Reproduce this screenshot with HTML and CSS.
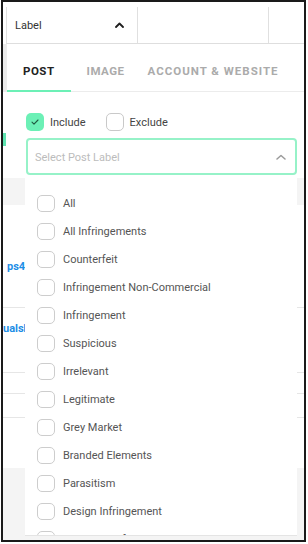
FILE: index.html
```html
<!DOCTYPE html>
<html>
<head>
<meta charset="utf-8">
<link rel="stylesheet" href="styles.css">
</head>
<body>
<div class="frame">
  <div class="thead">
    <div class="th th-label">
      <span>Label</span>
      <svg class="chev-head" width="9" height="6" viewBox="0 0 9 6"><path d="M1 5 L4.5 1.5 L8 5" /></svg>
    </div>
    <div class="th th-mid"></div>
    <div class="th th-last"></div>
  </div>
  <div class="tbody">
    <div class="row r-tabs"></div>
    <div class="row r-filter"><span class="teal"></span></div>
    <div class="row r-band"></div>
    <div class="row r-ps4"><span class="link">ps4</span></div>
    <div class="row r-dual"><span class="link">ualsh</span></div>
    <div class="row r-c"></div>
    <div class="row r-d"></div>
    <div class="row r-e"></div>
    <div class="row r-f"></div>
  </div>

  <div class="popover">
    <div class="tabs">
      <div class="tab active">POST</div>
      <div class="tab">IMAGE</div>
      <div class="tab tab-last">ACCOUNT &amp; WEBSITE</div>
    </div>
    <div class="filter">
      <div class="mode">
        <label class="opt">
          <span class="box on"><svg width="18" height="18" viewBox="0 0 18 18"><path d="M6 9.2 L8 11.2 L12 7" /></svg></span>
          <span>Include</span>
        </label>
        <label class="opt">
          <span class="box"></span>
          <span>Exclude</span>
        </label>
      </div>
      <div class="select">
        <span class="placeholder">Select Post Label</span>
        <svg class="chev-sel" width="10" height="6" viewBox="0 0 10 6"><path d="M1 5 L5 1.5 L9 5" /></svg>
      </div>
      <div class="list">
        <div class="item"><span class="cb"></span><span>All</span></div>
        <div class="item"><span class="cb"></span><span>All Infringements</span></div>
        <div class="item"><span class="cb"></span><span>Counterfeit</span></div>
        <div class="item"><span class="cb"></span><span>Infringement Non-Commercial</span></div>
        <div class="item"><span class="cb"></span><span>Infringement</span></div>
        <div class="item"><span class="cb"></span><span>Suspicious</span></div>
        <div class="item"><span class="cb"></span><span>Irrelevant</span></div>
        <div class="item"><span class="cb"></span><span>Legitimate</span></div>
        <div class="item"><span class="cb"></span><span>Grey Market</span></div>
        <div class="item"><span class="cb"></span><span>Branded Elements</span></div>
        <div class="item"><span class="cb"></span><span>Parasitism</span></div>
        <div class="item"><span class="cb"></span><span>Design Infringement</span></div>
        <div class="item"><span class="cb"></span><span>Copyright Infringement</span></div>
        <div class="item"><span class="cb"></span><span>Trademark Infringement</span></div>
        <div class="item"><span class="cb"></span><span>Patent Infringement</span></div>
        <div class="item"><span class="cb"></span><span>Unauthorized Seller</span></div>
        <div class="item"><span class="cb"></span><span>Price Violation</span></div>
        <div class="item"><span class="cb"></span><span>Duplicate</span></div>
        <div class="item"><span class="cb"></span><span>Fake Review</span></div>
        <div class="item"><span class="cb"></span><span>Other</span></div>
      </div>
    </div>
  </div>
</div>
</body>
</html>
```
FILE: styles.css
```css
html, body {
  margin: 0;
  padding: 0;
  background: #fff;
}
body {
  font-family: Roboto, "Liberation Sans", sans-serif;
  font-size: 11px;
  color: #444;
}
.frame {
  position: relative;
  box-sizing: border-box;
  height: 542px;
  margin: 0 2px 2px 1px;
  border: 2px solid #1a1a1a;
  overflow: hidden;
  background: #fff;
}

/* background table */
.thead {
  display: flex;
  box-sizing: border-box;
  height: 42px;
  margin-left: 3px;
  padding-top: 5px;
  border-bottom: 1px solid #dedede;
}
.th {
  display: flex;
  align-items: center;
  box-sizing: border-box;
  border-right: 1px solid #e0e0e0;
}
.th-label {
  width: 132px;
  border-left: 1px solid #e0e0e0;
  padding: 0 13px 0 8px;
  color: #333;
}
.chev-head {
  margin-left: auto;
}
.chev-head path {
  fill: none;
  stroke: #1e1e1e;
  stroke-width: 1.8;
  stroke-linecap: round;
  stroke-linejoin: round;
}
.th-mid { width: 131px; }
.th-last { flex: 1; border-right: 0; }

.row {
  box-sizing: border-box;
}
.r-tabs {
  height: 48px;
  border-left: 4px solid #ebebeb;
}
.r-filter {
  height: 86px;
  padding-top: 41px;
}
.teal {
  display: block;
  width: 3px;
  height: 13px;
  background: #5fe3b0;
}
.r-band {
  height: 27px;
  background: #f4f4f4;
}
.r-ps4 {
  height: 103px;
  padding: 55px 0 0 4px;
  border-bottom: 1px solid #e6e6e6;
}
.r-dual {
  height: 65px;
  padding-top: 14px;
  border-bottom: 1px solid #e6e6e6;
}
.link {
  display: block;
  color: #1d8ee6;
  font-weight: 700;
  font-size: 11px;
  line-height: 14px;
  white-space: nowrap;
}
.r-c { height: 21px; border-bottom: 1px solid #e6e6e6; }
.r-d { height: 24px; border-bottom: 1px solid #e6e6e6; }
.r-e { height: 50px; }
.r-f { height: 80px; background: #f4f4f4; }

/* popover */
.popover {
  position: absolute;
  top: 42px;
  left: 4px;
  right: 0;
  bottom: 0;
}
.tabs {
  display: flex;
  background: #fff;
  border-bottom: 1px solid #ececec;
}
.tab {
  padding: 20px 16px 12px;
  margin-bottom: -1px;
  line-height: 14px;
  font-size: 11.5px;
  font-weight: 700;
  letter-spacing: 0.5px;
  color: #ababab;
  border-bottom: 2px solid transparent;
}
.tab.active {
  color: #222;
  border-bottom-color: #6cf0b6;
}
.tab-last {
  padding-left: 7px;
  letter-spacing: 1px;
}
.filter {
  padding: 21px 0 0 19px;
}
.mode {
  display: flex;
  align-items: center;
  gap: 20px;
  height: 18px;
}
.opt {
  display: flex;
  align-items: center;
  gap: 6px;
  color: #444;
  font-size: 11px;
}
.box {
  box-sizing: border-box;
  width: 18px;
  height: 18px;
  border: 1px solid #c9c9c9;
  border-radius: 5px;
  background: #fff;
}
.box.on {
  border: 0;
  background: #6cf0b6;
}
.box svg {
  display: block;
}
.box path {
  fill: none;
  stroke: #1f5a40;
  stroke-width: 1.1;
  stroke-linecap: round;
  stroke-linejoin: round;
}
.select {
  display: flex;
  align-items: center;
  justify-content: space-between;
  box-sizing: border-box;
  width: 271px;
  height: 37px;
  margin-top: 7px;
  padding: 1px 9px 0 7px;
  border: 2px solid #96f2c8;
  border-radius: 4px;
  background: #fff;
}
.placeholder {
  color: #bcbcbc;
  font-size: 11px;
}
.chev-sel path {
  fill: none;
  stroke: #9a9a9a;
  stroke-width: 1.5;
  stroke-linecap: round;
  stroke-linejoin: round;
}
.list {
  box-sizing: border-box;
  width: 272px;
  height: 358px;
  margin: 3px 0 0 -1px;
  padding: 11px 0 14px;
  overflow-y: auto;
  background: #fff;
  border-bottom: 1px solid #e4e4e4;
}
.list::-webkit-scrollbar {
  width: 5px;
}
.list::-webkit-scrollbar-track {
  background: transparent;
}
.list::-webkit-scrollbar-thumb {
  background: #e9e9e9;
}
.item {
  display: flex;
  align-items: center;
  gap: 8px;
  height: 28px;
  padding-left: 12px;
  color: #555;
  font-size: 11px;
  white-space: nowrap;
}
.cb {
  box-sizing: border-box;
  flex: none;
  width: 18px;
  height: 17px;
  border: 1px solid #cdcdcd;
  border-radius: 5px;
}
```
